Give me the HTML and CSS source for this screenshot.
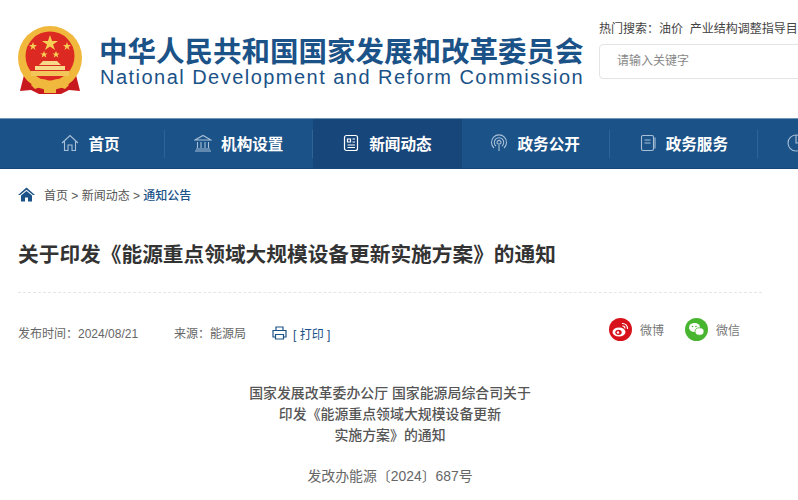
FILE: index.html
```html
<!DOCTYPE html>
<html lang="zh-CN">
<head>
  <meta charset="UTF-8" />
  <title>关于印发《能源重点领域大规模设备更新实施方案》的通知</title>
  <link rel="stylesheet" href="styles.css">
</head>
<body>
  <header class="site-header">
    <svg class="emblem" width="66" height="70" viewBox="0 0 66 70">
      <path d="M8 46 L3 66 L14 65 L22 69 L44 69 L52 65 L63 66 L58 46 Z" fill="#c8191f"/>
      <circle cx="33" cy="33" r="32" fill="#f0b83c"/>
      <circle cx="33" cy="31" r="24.5" fill="#dc2a22"/>
      <polygon points="33,10 35,16 41,16 36,19.500 38,25 33,21.500 28,25 30,19.500 25,16 31,16" fill="#f7cf55"/>
      <polygon points="16,17 17,20 20,20 17.500,22 18.500,25 16,23 13.500,25 14.500,22 12,20 15,20" fill="#f7cf55"/>
      <polygon points="50,17 51,20 54,20 51.500,22 52.500,25 50,23 47.500,25 48.500,22 46,20 49,20" fill="#f7cf55"/>
      <polygon points="27,26 28,28.500 30.500,28.500 28.500,30 29.300,32.500 27,31 24.700,32.500 25.500,30 23.500,28.500 26,28.500" fill="#f7cf55"/>
      <polygon points="39,26 40,28.500 42.500,28.500 40.500,30 41.300,32.500 39,31 36.700,32.500 37.500,30 35.500,28.500 38,28.500" fill="#f7cf55"/>
      <path d="M22 40 L26 36 H40 L44 40 Z" fill="#f7d98a"/>
      <rect x="18" y="41" width="30" height="4" fill="#f7d98a"/>
      <rect x="14" y="46" width="38" height="5" fill="#f3c65c"/>
      <path d="M14 60 Q24 50 33 57 Q42 50 52 60 L48 64 Q40 60 33 63 Q26 60 18 64 Z" fill="#f0b83c"/>
      <rect x="27" y="62" width="12" height="6" fill="#f0b83c"/>
    </svg>
    <div class="site-name">
      <div class="site-name-cn">中华人民共和国国家发展和改革委员会</div>
      <div class="site-name-en">National Development and Reform Commission</div>
    </div>
    <div class="search-box">
      <div class="hot-words">热门搜索&#65306;油价&nbsp;&nbsp;产业结构调整指导目录</div>
      <div class="search-input">请输入关键字</div>
    </div>
  </header>

  <nav class="main-nav">
    <a class="nav-item" href="#">
      <svg class="nav-icon" width="18" height="18" viewBox="0 0 18 18" fill="none" stroke="#a9c0d8" stroke-width="1.100">
        <path d="M1 9 L9 1.500 L17 9 M3.500 7.500 V16.500 H7 V11 H11 V16.500 H14.500 V7.500"/>
      </svg>
      首页
    </a>
    <a class="nav-item" href="#">
      <svg class="nav-icon" width="18" height="18" viewBox="0 0 18 18" fill="none" stroke="#a9c0d8" stroke-width="1.100">
        <path d="M1 6 L9 1.500 L17 6 H1 Z M3.500 8 V14 M7 8 V14 M11 8 V14 M14.500 8 V14 M2 15 H16 M1 17 H17"/>
      </svg>
      机构设置
    </a>
    <a class="nav-item nav-active" href="#">
      <svg class="nav-icon" width="18" height="18" viewBox="0 0 18 18" fill="none" stroke="#fff" stroke-width="1.200">
        <rect x="2.500" y="1.500" width="13" height="15" rx="2"/>
        <path d="M5.500 5 H8.500 V8 H5.500 Z M10.500 5 H13 M10.500 8 H13 M5.500 11 H13 M5.500 13.500 H13"/>
      </svg>
      新闻动态
    </a>
    <a class="nav-item" href="#">
      <svg class="nav-icon" width="18" height="18" viewBox="0 0 18 18" fill="none" stroke="#a9c0d8" stroke-width="1.100">
        <path d="M4 14 A7.500 7.500 0 1 1 14 14 M6 12 A4.700 4.700 0 1 1 12 12 M7.800 10 A2 2 0 1 1 10.200 10 M9 9 V17"/>
      </svg>
      政务公开
    </a>
    <a class="nav-item" href="#">
      <svg class="nav-icon" width="18" height="18" viewBox="0 0 18 18" fill="none" stroke="#a9c0d8" stroke-width="1.100">
        <rect x="2.500" y="1.500" width="12" height="15" rx="1.500"/>
        <path d="M5.500 6 H11.500 M5.500 9 H11.500 M16 3.500 V14.500"/>
      </svg>
      政务服务
    </a>
    <a class="nav-item" href="#">
      <svg class="nav-icon" width="18" height="18" viewBox="0 0 18 18" fill="none" stroke="#a9c0d8" stroke-width="1.100">
        <circle cx="9" cy="9" r="8"/>
        <path d="M9 1 V9 H17"/>
      </svg>
      数据发布
    </a>
  </nav>

  <div class="breadcrumb">
    <svg class="crumb-home" width="17" height="15" viewBox="0 0 17 15">
      <path d="M8.500 0.500 L17 8 L15 8 L8.500 2.800 L2 8 L0 8 Z" fill="#1b5287"/>
      <path d="M3 8.500 L8.500 4 L14 8.500 V14.500 H10 V10.500 H7 V14.500 H3 Z" fill="#1b5287"/>
    </svg>
    <span>首页 &gt; 新闻动态 &gt; <b class="crumb-current">通知公告</b></span>
  </div>

  <h1 class="article-title">关于印发《能源重点领域大规模设备更新实施方案》的通知</h1>

  <div class="article-meta">
    <span class="meta-date">发布时间&#65306;2024/08/21</span>
    <span class="meta-source">来源&#65306;能源局</span>
    <span class="meta-print">
      <svg width="15" height="14" viewBox="0 0 15 14" fill="none" stroke="#1b5287" stroke-width="1.200">
        <path d="M4 4.500 V1 H11 V4.500 M3.500 11 H1 V4.500 H14 V11 H11.500 M3.500 8.500 H11.500 V13 H3.500 Z"/>
      </svg>
      [ 打印 ]
    </span>
    <div class="share">
      <span class="share-item">
        <svg width="23" height="23" viewBox="0 0 23 23">
          <circle cx="11.500" cy="11.500" r="11.500" fill="#d7121a"/>
          <ellipse cx="10" cy="14" rx="6.500" ry="4.500" fill="#fff"/>
          <ellipse cx="9.500" cy="14.300" rx="3.200" ry="2.600" fill="#d7121a"/>
          <circle cx="9" cy="14.500" r="1.200" fill="#fff"/>
          <path d="M13 5.500 A5 5 0 0 1 18.500 11 M13.500 8 A2.500 2.500 0 0 1 16 10.500" fill="none" stroke="#fff" stroke-width="1.100"/>
        </svg>
        微博
      </span>
      <span class="share-item">
        <svg width="23" height="23" viewBox="0 0 23 23">
          <circle cx="11.500" cy="11.500" r="11.500" fill="#47b52f"/>
          <ellipse cx="9.500" cy="9.500" rx="5.500" ry="4.500" fill="#fff"/>
          <ellipse cx="14.500" cy="13.500" rx="4.500" ry="3.700" fill="#fff" stroke="#47b52f" stroke-width="0.800"/>
          <circle cx="7.500" cy="8.500" r="0.800" fill="#47b52f"/>
          <circle cx="11" cy="8.500" r="0.800" fill="#47b52f"/>
        </svg>
        微信
      </span>
    </div>
  </div>

  <div class="article-body">
    <p class="doc-title">国家发展改革委办公厅 国家能源局综合司关于<br>印发《能源重点领域大规模设备更新<br>实施方案》的通知</p>
    <p class="doc-number">发改办能源〔2024〕687号</p>
  </div>
</body>
</html>
```

FILE: styles.css
```css
* {
  margin: 0;
  padding: 0;
  box-sizing: border-box;
}

html, body {
  height: 500px;
  overflow: hidden;
}

body {
  width: 798px;
  background-color: white;
  color: #666;
  font-family: "Liberation Sans", "Noto Sans CJK SC", sans-serif;
  font-size: 12px;
}

a {
  color: white;
  text-decoration: none;
}

.site-header {
  height: 118px;
  display: flex;
  align-items: flex-start;
  padding: 25px 0 0 17px;
}

.emblem {
  flex-shrink: 0;
}

.site-name {
  margin: 12px 0 0 16px;
  width: 484px;
  flex-shrink: 0;
  color: #1b5287;
}

.site-name-cn {
  font-size: 28.500px;
  line-height: 30px;
  font-weight: bold;
  white-space: nowrap;
}

.site-name-en {
  font-size: 20px;
  line-height: 20px;
  letter-spacing: 1.470px;
  padding-left: 1px;
  white-space: nowrap;
}

.search-box {
  margin: -4px 0 0 16px;
  flex-shrink: 0;
  width: 230px;
}

.hot-words {
  font-size: 12px;
  line-height: 16px;
  color: #444;
  white-space: nowrap;
}

.search-input {
  margin-top: 7px;
  height: 35px;
  line-height: 33px;
  padding-left: 17px;
  border: 1px solid #e4e4e4;
  border-radius: 4px;
  color: #888;
}

.main-nav {
  height: 51px;
  display: flex;
  padding-left: 17px;
  background-color: #1b5287;
  border-top: 1px solid #6c93b8;
  border-bottom: 1px solid #17467a;
}

.nav-item {
  flex: 0 0 148.200px;
  height: 49px;
  padding: 0 1px 2px 0;
  display: flex;
  align-items: center;
  justify-content: center;
  gap: 9px;
  font-size: 15.600px;
  font-weight: bold;
  white-space: nowrap;
  background: linear-gradient(#2f6499, #2f6499) no-repeat right center / 1px 28px;
}

.nav-active {
  background: #17467a;
}

.breadcrumb {
  display: flex;
  align-items: center;
  gap: 9px;
  height: 52px;
  padding: 0 0 1px 18px;
  color: #555;
}

.crumb-current {
  font-weight: 500;
  color: #1b5287;
}

.article-title {
  margin: 17px 0 0 18px;
  font-size: 20.700px;
  line-height: 34px;
  color: #333;
}

.article-meta {
  margin: 20px 36px 0 18px;
  padding-top: 21px;
  border-top: 1px dashed #e6e6e6;
  display: flex;
  align-items: center;
  height: 58px;
}

.meta-date {
  width: 156px;
}

.meta-source {
  width: 98px;
}

.meta-print {
  display: flex;
  align-items: center;
  gap: 6px;
  padding-top: 2px;
  color: #1b5287;
}

.share {
  margin-left: auto;
  margin-right: 22px;
  display: flex;
  gap: 21px;
  margin-top: -6px;
}

.share-item {
  display: flex;
  align-items: center;
  gap: 8px;
  color: #777;
}

.article-body {
  margin-top: 33px;
  padding-right: 18px;
  text-align: center;
  font-size: 13.900px;
  color: #555;
}

.doc-title {
  line-height: 21px;
  font-weight: 500;
}

.doc-number {
  margin-top: 20px;
  line-height: 21px;
  color: #666;
}
```
